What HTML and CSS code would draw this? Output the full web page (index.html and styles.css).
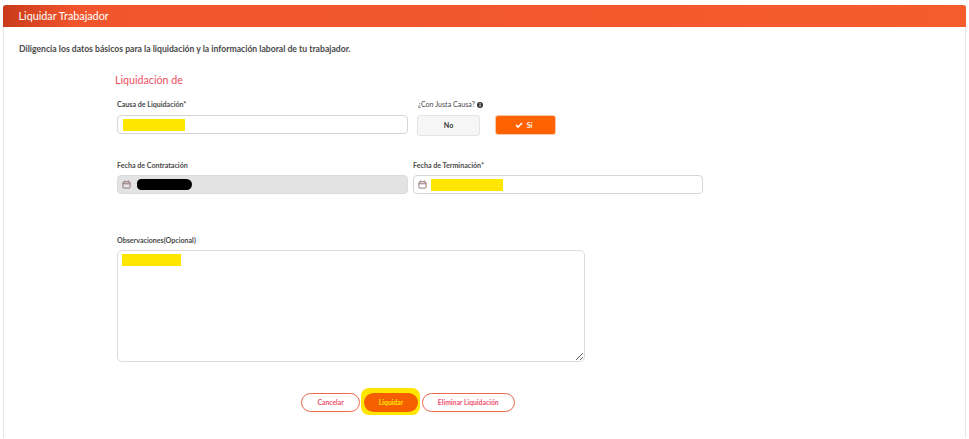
FILE: index.html
```html
<!DOCTYPE html>
<html lang="es">
<head>
<meta charset="utf-8">
<title>Liquidar Trabajador</title>
<link rel="stylesheet" href="styles.css">
</head>
<body>
<main class="card">
  <header class="card-head">Liquidar Trabajador</header>
  <p class="intro">Diligencia los datos básicos para la liquidación y la información laboral de tu trabajador.</p>
  <form class="form">
    <h2 class="title">Liquidación de</h2>
    <div class="row row-cause">
      <div class="field field-cause">
        <label class="label">Causa de Liquidación*</label>
        <div class="input input-cause"><span class="mark mark-cause"></span></div>
      </div>
      <div class="field field-just">
        <label class="label label-just">¿Con Justa Causa?
          <svg class="info" viewBox="0 0 10 10" aria-hidden="true"><circle cx="5" cy="5" r="5" fill="#333"/><rect x="4.2" y="4.2" width="1.8" height="3.6" fill="#fff"/><rect x="4.2" y="2" width="1.8" height="1.5" fill="#fff"/></svg>
        </label>
        <div class="choices">
          <button type="button" class="choice choice-no">No</button>
          <button type="button" class="choice choice-yes">
            <svg class="check" viewBox="0 0 10 8" aria-hidden="true"><path d="M1 4.2 3.7 6.8 9 1.3" fill="none" stroke="#fff" stroke-width="2"/></svg>
            Sí
          </button>
        </div>
      </div>
    </div>
    <div class="row row-dates">
      <div class="field field-start">
        <label class="label">Fecha de Contratación</label>
        <div class="input input-date input-off">
          <svg class="cal" viewBox="0 0 10 10" aria-hidden="true"><rect x="1" y="2" width="8" height="7" rx="1.2" fill="none" stroke="#8a6d6d"/><path d="M1 4.2h8M3 .6v2M7 .6v2" fill="none" stroke="#8a6d6d"/></svg>
          <span class="redact"></span>
        </div>
      </div>
      <div class="field field-end">
        <label class="label">Fecha de Terminación*</label>
        <div class="input input-date">
          <svg class="cal" viewBox="0 0 10 10" aria-hidden="true"><rect x="1" y="2" width="8" height="7" rx="1.2" fill="none" stroke="#8a6d6d"/><path d="M1 4.2h8M3 .6v2M7 .6v2" fill="none" stroke="#8a6d6d"/></svg>
          <span class="mark mark-end"></span>
        </div>
      </div>
    </div>
    <div class="field field-notes">
      <label class="label">Observaciones(Opcional)</label>
      <div class="notes-wrap">
        <textarea class="notes"></textarea>
        <span class="mark mark-notes"></span>
      </div>
    </div>
    <div class="actions">
      <button type="button" class="btn">Cancelar</button>
      <button type="button" class="btn btn-primary">Liquidar</button>
      <button type="button" class="btn btn-wide">Eliminar Liquidación</button>
    </div>
  </form>
</main>
</body>
</html>
```

FILE: styles.css
```css
* { box-sizing: border-box; }
html, body { margin: 0; height: 439px; overflow: hidden; background: #fff; }
body { font-family: Lato, "Liberation Sans", sans-serif; color: #333; }

.card {
  height: 433px;
  margin: 5px 3px 0;
  border-left: 1px solid #e6e6e6;
  border-right: 1px solid #e6e6e6;
}
.card-head {
  height: 22px;
  margin: 0 -1px;
  padding-left: 15.5px;
  border-radius: 3px 3px 0 0;
  background: linear-gradient(90deg, #c93a1b 0, #f0552c 70px, #f45b2d 100%);
  color: #fff;
  font-size: 10.8px;
  line-height: 22px;
}
.intro {
  margin: 16px 0 0 15px;
  font-size: 8.65px;
  font-weight: 700;
  line-height: 12px;
  color: #4a4a4a;
}
.form { margin: 18px 0 0 111px; width: 600px; }
.title {
  margin: 0;
  font-size: 10.7px;
  font-weight: 400;
  line-height: 14px;
  color: #ef4f5f;
}
.label {
  display: block;
  height: 10px;
  font-size: 7.1px;
  font-weight: 700;
  line-height: 10px;
  color: #4a4a4a;
  white-space: nowrap;
}
.row { display: flex; }
.row-cause { margin: 13px 0 0 2px; }
.field-cause { width: 291px; }
.field-just { margin-left: 9px; }
.label-just { margin-left: 1px; display: flex; align-items: center; gap: 2px; font-weight: 400; }
.info { width: 6px; height: 6px; }
.input {
  display: flex;
  align-items: center;
  height: 19px;
  margin-top: 4px;
  padding-left: 5px;
  border: 1px solid #d5d5d5;
  border-radius: 4px;
  background: #fff;
}
.input-cause { margin-top: 5px; }
.mark { display: block; background: #ffe600; }
.mark-cause { width: 62px; height: 12px; }
.choices { display: flex; gap: 15px; margin-top: 5px; }
.choice {
  display: flex;
  align-items: center;
  justify-content: center;
  gap: 4px;
  padding: 0;
  border-radius: 3px;
  font-family: inherit;
  font-size: 7.1px;
  font-weight: 700;
}
.choice-no { width: 63px; height: 21px; border: 1px solid #e4e4e4; background: #f6f6f6; color: #333; }
.choice-yes { width: 61px; height: 20px; padding-right: 4px; border: 1px solid #f7c9a8; background: #ff6200; color: #fff; }
.check { width: 8px; height: 6px; }

.row-dates { margin: 25px 0 0 2px; }
.field-start { width: 291px; }
.field-end { width: 290px; margin-left: 5px; }
.input-date { gap: 4px; padding-left: 4px; }
.input-off { gap: 6px; background: #e3e3e3; border-color: #dcdcdc; }
.cal { width: 9px; height: 9px; flex: none; }
.redact { width: 55px; height: 11px; border-radius: 6px 8px 8px 6px; background: #000; }
.mark-end { width: 72px; height: 12px; }

.field-notes { margin: 42px 0 0 2px; }
.notes-wrap { position: relative; margin-top: 4px; width: 468px; height: 112px; }
.notes {
  display: block;
  width: 468px;
  height: 112px;
  border: 1px solid #dcdcdc;
  border-radius: 5px;
  background: #fff;
  outline: none;
}
.mark-notes { position: absolute; left: 5px; top: 4px; width: 59px; height: 12px; }

.actions { display: flex; gap: 4px; margin: 31px 0 0 186px; }
.btn {
  position: relative;
  height: 19px;
  padding: 0 15.5px;
  border: 1px solid #ee6a50;
  border-radius: 10px;
  background: #fff;
  color: #f0506e;
  font-family: inherit;
  font-size: 6.8px;
  font-weight: 700;
  line-height: 17px;
  white-space: nowrap;
}
.btn-wide { padding: 0 15px; }
.btn-primary { z-index: 0; padding: 0 13.5px; border-color: #f55f00; background: #f55f00; color: #ffe600; }
.btn-primary::before {
  content: "";
  position: absolute;
  z-index: -1;
  left: -4px;
  right: -3px;
  top: -6px;
  bottom: -4px;
  border-radius: 8px;
  background: #ffe600;
}
.btn-primary::after {
  content: "";
  position: absolute;
  z-index: -1;
  inset: -1px;
  border-radius: 10px;
  background: #f55f00;
}
```
